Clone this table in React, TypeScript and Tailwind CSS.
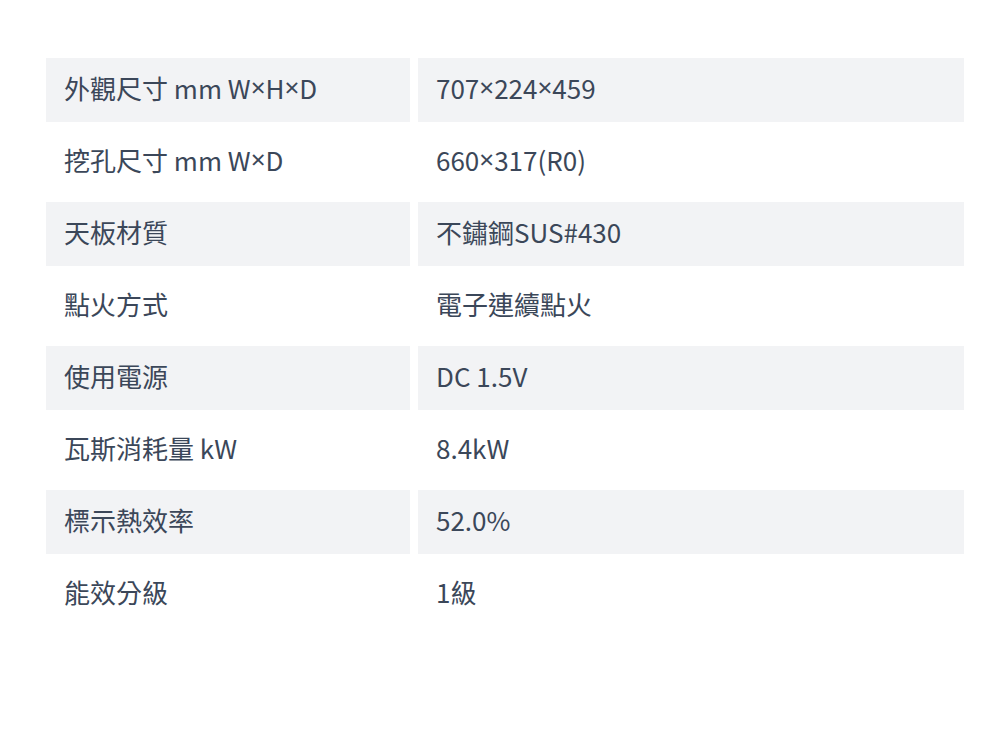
import React from "react";

const rows: [string, string][] = [
  ["外觀尺寸 mm W×H×D", "707×224×459"],
  ["挖孔尺寸 mm W×D", "660×317(R0)"],
  ["天板材質", "不鏽鋼SUS#430"],
  ["點火方式", "電子連續點火"],
  ["使用電源", "DC 1.5V"],
  ["瓦斯消耗量 kW", "8.4kW"],
  ["標示熱效率", "52.0%"],
  ["能效分級", "1級"],
];

function T({ s }: { s: string }) {
  const parts = s.split("×");
  return (
    <>
      {parts.map((p, i) => (
        <React.Fragment key={i}>
          {i > 0 && <span style={{ fontFamily: '"Noto Sans", sans-serif' }}>×</span>}
          {p}
        </React.Fragment>
      ))}
    </>
  );
}

export default function App() {
  return (
    <div
      className="w-[1000px] h-[745px] bg-white pt-[58px] pl-[46px] text-[#3b4759]"
      style={{ fontFamily: '"Noto Sans CJK TC", sans-serif' }}
    >
      <div className="flex flex-col gap-2">
        {rows.map(([k, v], i) => {
          const bg = i % 2 === 0 ? "bg-[#f2f3f5]" : "bg-white";
          return (
            <div key={i} className="flex gap-2">
              <div className={`w-[364px] h-16 flex items-center pl-[18px] pb-[5px] text-[26px] ${bg}`}>
                <T s={k} />
              </div>
              <div className={`w-[546px] h-16 flex items-center pl-[18px] pb-[5px] text-[26px] ${bg}`}>
                <T s={v} />
              </div>
            </div>
          );
        })}
      </div>
    </div>
  );
}
